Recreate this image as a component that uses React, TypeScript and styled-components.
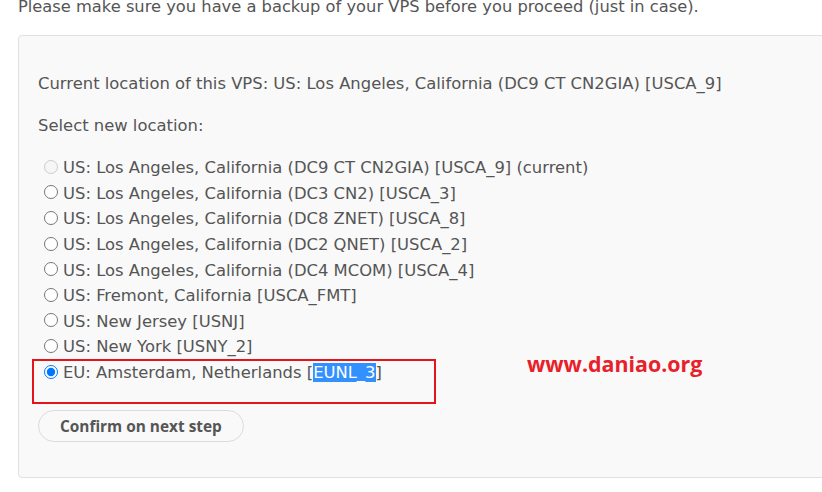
import styled, { createGlobalStyle } from "styled-components";

const GlobalStyle = createGlobalStyle`
  html, body {
    margin: 0;
    padding: 0;
    background: #ffffff;
    overflow: hidden;
  }
  body {
    font-family: "DejaVu Sans", Verdana, sans-serif;
    color: #555;
  }
`;

const locations = [
  { label: "US: Los Angeles, California (DC9 CT CN2GIA) [USCA_9] (current)", disabled: true },
  { label: "US: Los Angeles, California (DC3 CN2) [USCA_3]" },
  { label: "US: Los Angeles, California (DC8 ZNET) [USCA_8]" },
  { label: "US: Los Angeles, California (DC2 QNET) [USCA_2]" },
  { label: "US: Los Angeles, California (DC4 MCOM) [USCA_4]" },
  { label: "US: Fremont, California [USCA_FMT]" },
  { label: "US: New Jersey [USNJ]" },
  { label: "US: New York [USNY_2]" },
];

const App = () => {
  return (
    <>
      <GlobalStyle />
      <Page>
        <Notice>Please make sure you have a backup of your VPS before you proceed (just in case).</Notice>
        <Panel>
          <Info>Current location of this VPS: US: Los Angeles, California (DC9 CT CN2GIA) [USCA_9]</Info>
          <Info>Select new location:</Info>
          <OptionList>
            {locations.map((loc) => (
              <Option key={loc.label}>
                <Radio type="radio" name="loc" disabled={loc.disabled} />
                <span>{loc.label}</span>
              </Option>
            ))}
            <Option>
              <Radio type="radio" name="loc" defaultChecked />
              <span>
                EU: Amsterdam, Netherlands [<Selected>EUNL_3</Selected>]
              </span>
            </Option>
          </OptionList>
          <ConfirmButton type="button">Confirm on next step</ConfirmButton>
          <HighlightBox />
          <Watermark>www.daniao.org</Watermark>
        </Panel>
      </Page>
    </>
  );
};

export default App;

const Page = styled.div`
  padding: 0 0 0 18px;
  margin-top: -3px;
`;

const Notice = styled.p`
  margin: 0 0 18px 0;
  font-size: 16.3px;
  line-height: 20px;
  white-space: nowrap;
  color: #555;
`;

const Panel = styled.section`
  position: relative;
  width: 840px;
  height: 443px;
  box-sizing: border-box;
  background: #f9f9f9;
  border: 1px solid #e1e1e1;
  border-radius: 4px;
  padding: 35px 19px 0 19px;
`;

const Info = styled.p`
  margin: 0 0 16px 0;
  font-size: 16.4px;
  line-height: 26px;
  white-space: nowrap;
  color: #555;
`;

const OptionList = styled.div`
  display: flex;
  flex-direction: column;
  margin-top: 3px;
`;

const Option = styled.label`
  display: flex;
  align-items: center;
  height: 25.6px;
  font-size: 16.4px;
  white-space: nowrap;
  color: #555;
`;

const Radio = styled.input`
  width: 14px;
  height: 14px;
  margin: 0 5px 2px 6px;
  flex-shrink: 0;
`;

const Selected = styled.span`
  background: #3390ff;
  color: #ffffff;
`;

const ConfirmButton = styled.button`
  margin-top: 25px;
  height: 32px;
  padding: 0 21px;
  border: 1px solid #dcdcdc;
  border-radius: 16px;
  background: #f9f9f9;
  color: #555;
  font-family: "Open Sans", "Noto Sans", sans-serif;
  font-weight: 700;
  font-size: 15.4px;
`;

const HighlightBox = styled.div`
  position: absolute;
  left: 13px;
  top: 323px;
  width: 404px;
  height: 45px;
  box-sizing: border-box;
  border: 2px solid #e5141b;
`;

const Watermark = styled.div`
  position: absolute;
  left: 508px;
  top: 313px;
  color: #e8202a;
  font-family: "Open Sans", "Noto Sans", sans-serif;
  font-weight: 700;
  font-size: 21.4px;
`;
